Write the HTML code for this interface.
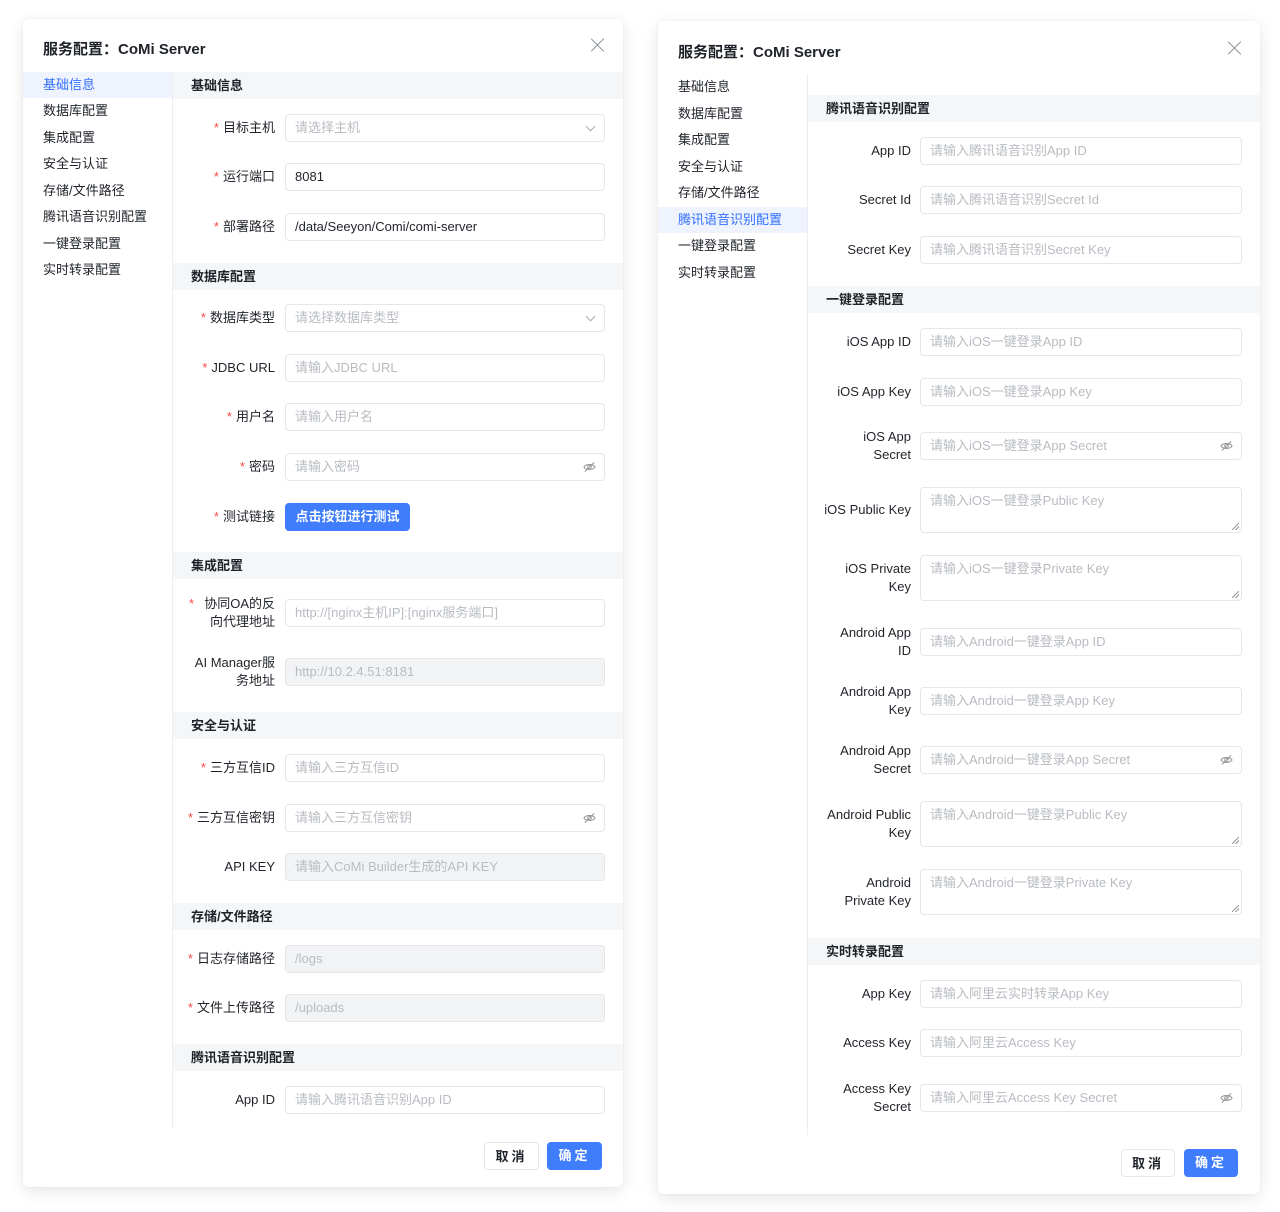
<!DOCTYPE html>
<html><head><meta charset="utf-8"><style>
*{box-sizing:border-box;margin:0;padding:0}
body{width:1280px;height:1212px;background:#fff;position:relative;font-family:"Liberation Sans","Noto Sans CJK SC",sans-serif;font-size:13px;color:#1f2329;overflow:hidden}
.p{position:absolute;background:#fff;border-radius:6px;box-shadow:0 4px 16px rgba(0,0,0,.10),0 0 2px rgba(0,0,0,.06)}
.t{position:absolute;font-size:15px;font-weight:bold;color:#1f2329}
.x{position:absolute;width:14px;height:14px}
.x:before,.x:after{content:"";position:absolute;left:6px;top:-2px;width:1.3px;height:18px;background:#8f959e;transform:rotate(45deg)}
.x:after{transform:rotate(-45deg)}
.nav{position:absolute;font-size:13px;color:#1f2329;line-height:26px;padding-left:20px}
.act{background:#eef3fe;color:#3370ff}
.vl{position:absolute;width:1px;background:#ebedf0}
.sh{position:absolute;background:#f5f6f7;font-weight:bold;font-size:13px;padding-left:18px;height:27px;line-height:27px}
.lb{position:absolute;text-align:right;line-height:18px;transform:translateY(-50%);color:#1f2329}
.lb i{color:#f54a45;font-style:normal;margin-right:4px}
.in{position:absolute;height:28px;border:1px solid #e4e6ea;border-radius:4px;padding-left:9px;line-height:26px;color:#b8bcc2;background:#fff;white-space:nowrap;overflow:hidden}
.in.v{color:#1f2329}
.in.d{background:#f2f3f5}
.ta{position:absolute;height:46px;border:1px solid #e4e6ea;border-radius:4px;padding:3px 9px;line-height:20px;color:#b8bcc2}
.ta:after{content:"";position:absolute;right:2px;bottom:2px;width:7px;height:7px;background:linear-gradient(135deg,transparent 45%,#999 45%,#999 55%,transparent 55%,transparent 70%,#999 70%,#999 80%,transparent 80%)}
.eye{position:absolute;right:8px;top:7px;width:13px;height:12px}
.arr{position:absolute;right:10px;top:8px;width:7px;height:7px;border-right:1px solid #aaa;border-bottom:1px solid #aaa;transform:rotate(45deg)}
.btn{position:absolute;height:28px;border-radius:4px;text-align:center;line-height:28px;font-size:13px;font-weight:bold;letter-spacing:3px}
.cb{border:1px solid #e4e6ea;background:#fff;color:#1f2329}
.ob{background:#3f7dfd;color:#fff}
</style></head><body>

<!-- LEFT PANEL -->
<div class="p" style="left:23px;top:19px;width:600px;height:1168px"></div>
<div class="t" style="left:43px;top:38px">服务配置：CoMi Server</div>
<div class="x" style="left:591px;top:38px"></div>
<div class="nav act" style="left:23px;top:72px;width:149px">基础信息</div>
<div class="nav" style="left:23px;top:98px">数据库配置</div>
<div class="nav" style="left:23px;top:125px">集成配置</div>
<div class="nav" style="left:23px;top:151px">安全与认证</div>
<div class="nav" style="left:23px;top:178px">存储/文件路径</div>
<div class="nav" style="left:23px;top:204px">腾讯语音识别配置</div>
<div class="nav" style="left:23px;top:231px">一键登录配置</div>
<div class="nav" style="left:23px;top:257px">实时转录配置</div>
<div class="vl" style="left:172px;top:72px;height:1056px"></div>

<div class="sh" style="left:173px;top:72px;width:450px">基础信息</div>
<div class="lb" style="right:1005px;top:128px"><i>*</i>目标主机</div>
<div class="in" style="left:285px;top:114px;width:320px">请选择主机<span class="arr"></span></div>
<div class="lb" style="right:1005px;top:177px"><i>*</i>运行端口</div>
<div class="in v" style="left:285px;top:163px;width:320px">8081</div>
<div class="lb" style="right:1005px;top:227px"><i>*</i>部署路径</div>
<div class="in v" style="left:285px;top:213px;width:320px">/data/Seeyon/Comi/comi-server</div>

<div class="sh" style="left:173px;top:263px;width:450px">数据库配置</div>
<div class="lb" style="right:1005px;top:318px"><i>*</i>数据库类型</div>
<div class="in" style="left:285px;top:304px;width:320px">请选择数据库类型<span class="arr"></span></div>
<div class="lb" style="right:1005px;top:368px"><i>*</i>JDBC URL</div>
<div class="in" style="left:285px;top:354px;width:320px">请输入JDBC URL</div>
<div class="lb" style="right:1005px;top:417px"><i>*</i>用户名</div>
<div class="in" style="left:285px;top:403px;width:320px">请输入用户名</div>
<div class="lb" style="right:1005px;top:467px"><i>*</i>密码</div>
<div class="in" style="left:285px;top:453px;width:320px">请输入密码<svg class="eye" viewBox="0 0 14 12"><path d="M1 6C3 2.5 11 2.5 13 6C11 9.5 3 9.5 1 6Z M2 11L12 1" fill="none" stroke="#999" stroke-width="1.1"/><circle cx="7" cy="6" r="2" fill="none" stroke="#999"/></svg></div>
<div class="lb" style="right:1005px;top:517px"><i>*</i>测试链接</div>
<div class="btn ob" style="left:285px;top:503px;width:125px;letter-spacing:0">点击按钮进行测试</div>

<div class="sh" style="left:173px;top:552px;width:450px">集成配置</div>
<div class="lb" style="left:185px;top:613px;width:90px"><i style="position:absolute;left:4px;top:0">*</i>协同OA的反<br>向代理地址</div>
<div class="in" style="left:285px;top:599px;width:320px">http://[nginx主机IP]:[nginx服务端口]</div>
<div class="lb" style="left:185px;top:672px;width:90px">AI Manager服<br>务地址</div>
<div class="in d" style="left:285px;top:658px;width:320px">http://10.2.4.51:8181</div>

<div class="sh" style="left:173px;top:712px;width:450px">安全与认证</div>
<div class="lb" style="right:1005px;top:768px"><i>*</i>三方互信ID</div>
<div class="in" style="left:285px;top:754px;width:320px">请输入三方互信ID</div>
<div class="lb" style="right:1005px;top:818px"><i>*</i>三方互信密钥</div>
<div class="in" style="left:285px;top:804px;width:320px">请输入三方互信密钥<svg class="eye" viewBox="0 0 14 12"><path d="M1 6C3 2.5 11 2.5 13 6C11 9.5 3 9.5 1 6Z M2 11L12 1" fill="none" stroke="#999" stroke-width="1.1"/><circle cx="7" cy="6" r="2" fill="none" stroke="#999"/></svg></div>
<div class="lb" style="right:1005px;top:867px">API KEY</div>
<div class="in d" style="left:285px;top:853px;width:320px">请输入CoMi Builder生成的API KEY</div>

<div class="sh" style="left:173px;top:903px;width:450px">存储/文件路径</div>
<div class="lb" style="right:1005px;top:959px"><i>*</i>日志存储路径</div>
<div class="in d" style="left:285px;top:945px;width:320px">/logs</div>
<div class="lb" style="right:1005px;top:1008px"><i>*</i>文件上传路径</div>
<div class="in d" style="left:285px;top:994px;width:320px">/uploads</div>

<div class="sh" style="left:173px;top:1044px;width:450px">腾讯语音识别配置</div>
<div class="lb" style="right:1005px;top:1100px">App ID</div>
<div class="in" style="left:285px;top:1086px;width:320px">请输入腾讯语音识别App ID</div>

<div class="btn cb" style="left:484px;top:1142px;width:55px">取消</div>
<div class="btn ob" style="left:547px;top:1142px;width:55px">确定</div>

<!-- RIGHT PANEL -->
<div class="p" style="left:658px;top:21px;width:602px;height:1173px"></div>
<div class="t" style="left:678px;top:41px">服务配置：CoMi Server</div>
<div class="x" style="left:1228px;top:41px"></div>
<div class="nav" style="left:658px;top:74px">基础信息</div>
<div class="nav" style="left:658px;top:101px">数据库配置</div>
<div class="nav" style="left:658px;top:127px">集成配置</div>
<div class="nav" style="left:658px;top:154px">安全与认证</div>
<div class="nav" style="left:658px;top:180px">存储/文件路径</div>
<div class="nav act" style="left:658px;top:207px;width:149px">腾讯语音识别配置</div>
<div class="nav" style="left:658px;top:233px">一键登录配置</div>
<div class="nav" style="left:658px;top:260px">实时转录配置</div>
<div class="vl" style="left:807px;top:74px;height:1061px"></div>

<div class="sh" style="left:808px;top:95px;width:452px">腾讯语音识别配置</div>
<div class="lb" style="right:369px;top:151px">App ID</div>
<div class="in" style="left:920px;top:137px;width:322px">请输入腾讯语音识别App ID</div>
<div class="lb" style="right:369px;top:200px">Secret Id</div>
<div class="in" style="left:920px;top:186px;width:322px">请输入腾讯语音识别Secret Id</div>
<div class="lb" style="right:369px;top:250px">Secret Key</div>
<div class="in" style="left:920px;top:236px;width:322px">请输入腾讯语音识别Secret Key</div>

<div class="sh" style="left:808px;top:286px;width:452px">一键登录配置</div>
<div class="lb" style="right:369px;top:342px">iOS App ID</div>
<div class="in" style="left:920px;top:328px;width:322px">请输入iOS一键登录App ID</div>
<div class="lb" style="right:369px;top:392px">iOS App Key</div>
<div class="in" style="left:920px;top:378px;width:322px">请输入iOS一键登录App Key</div>
<div class="lb" style="right:369px;top:446px">iOS App<br>Secret</div>
<div class="in" style="left:920px;top:432px;width:322px">请输入iOS一键登录App Secret<svg class="eye" viewBox="0 0 14 12"><path d="M1 6C3 2.5 11 2.5 13 6C11 9.5 3 9.5 1 6Z M2 11L12 1" fill="none" stroke="#999" stroke-width="1.1"/><circle cx="7" cy="6" r="2" fill="none" stroke="#999"/></svg></div>
<div class="lb" style="right:369px;top:510px">iOS Public Key</div>
<div class="ta" style="left:920px;top:487px;width:322px">请输入iOS一键登录Public Key</div>
<div class="lb" style="right:369px;top:578px">iOS Private<br>Key</div>
<div class="ta" style="left:920px;top:555px;width:322px">请输入iOS一键登录Private Key</div>
<div class="lb" style="right:369px;top:642px">Android App<br>ID</div>
<div class="in" style="left:920px;top:628px;width:322px">请输入Android一键登录App ID</div>
<div class="lb" style="right:369px;top:701px">Android App<br>Key</div>
<div class="in" style="left:920px;top:687px;width:322px">请输入Android一键登录App Key</div>
<div class="lb" style="right:369px;top:760px">Android App<br>Secret</div>
<div class="in" style="left:920px;top:746px;width:322px">请输入Android一键登录App Secret<svg class="eye" viewBox="0 0 14 12"><path d="M1 6C3 2.5 11 2.5 13 6C11 9.5 3 9.5 1 6Z M2 11L12 1" fill="none" stroke="#999" stroke-width="1.1"/><circle cx="7" cy="6" r="2" fill="none" stroke="#999"/></svg></div>
<div class="lb" style="right:369px;top:824px">Android Public<br>Key</div>
<div class="ta" style="left:920px;top:801px;width:322px">请输入Android一键登录Public Key</div>
<div class="lb" style="right:369px;top:892px">Android<br>Private Key</div>
<div class="ta" style="left:920px;top:869px;width:322px">请输入Android一键登录Private Key</div>

<div class="sh" style="left:808px;top:938px;width:452px">实时转录配置</div>
<div class="lb" style="right:369px;top:994px">App Key</div>
<div class="in" style="left:920px;top:980px;width:322px">请输入阿里云实时转录App Key</div>
<div class="lb" style="right:369px;top:1043px">Access Key</div>
<div class="in" style="left:920px;top:1029px;width:322px">请输入阿里云Access Key</div>
<div class="lb" style="right:369px;top:1098px">Access Key<br>Secret</div>
<div class="in" style="left:920px;top:1084px;width:322px">请输入阿里云Access Key Secret<svg class="eye" viewBox="0 0 14 12"><path d="M1 6C3 2.5 11 2.5 13 6C11 9.5 3 9.5 1 6Z M2 11L12 1" fill="none" stroke="#999" stroke-width="1.1"/><circle cx="7" cy="6" r="2" fill="none" stroke="#999"/></svg></div>

<div class="btn cb" style="left:1121px;top:1149px;width:54px">取消</div>
<div class="btn ob" style="left:1184px;top:1149px;width:54px">确定</div>
</body></html>
